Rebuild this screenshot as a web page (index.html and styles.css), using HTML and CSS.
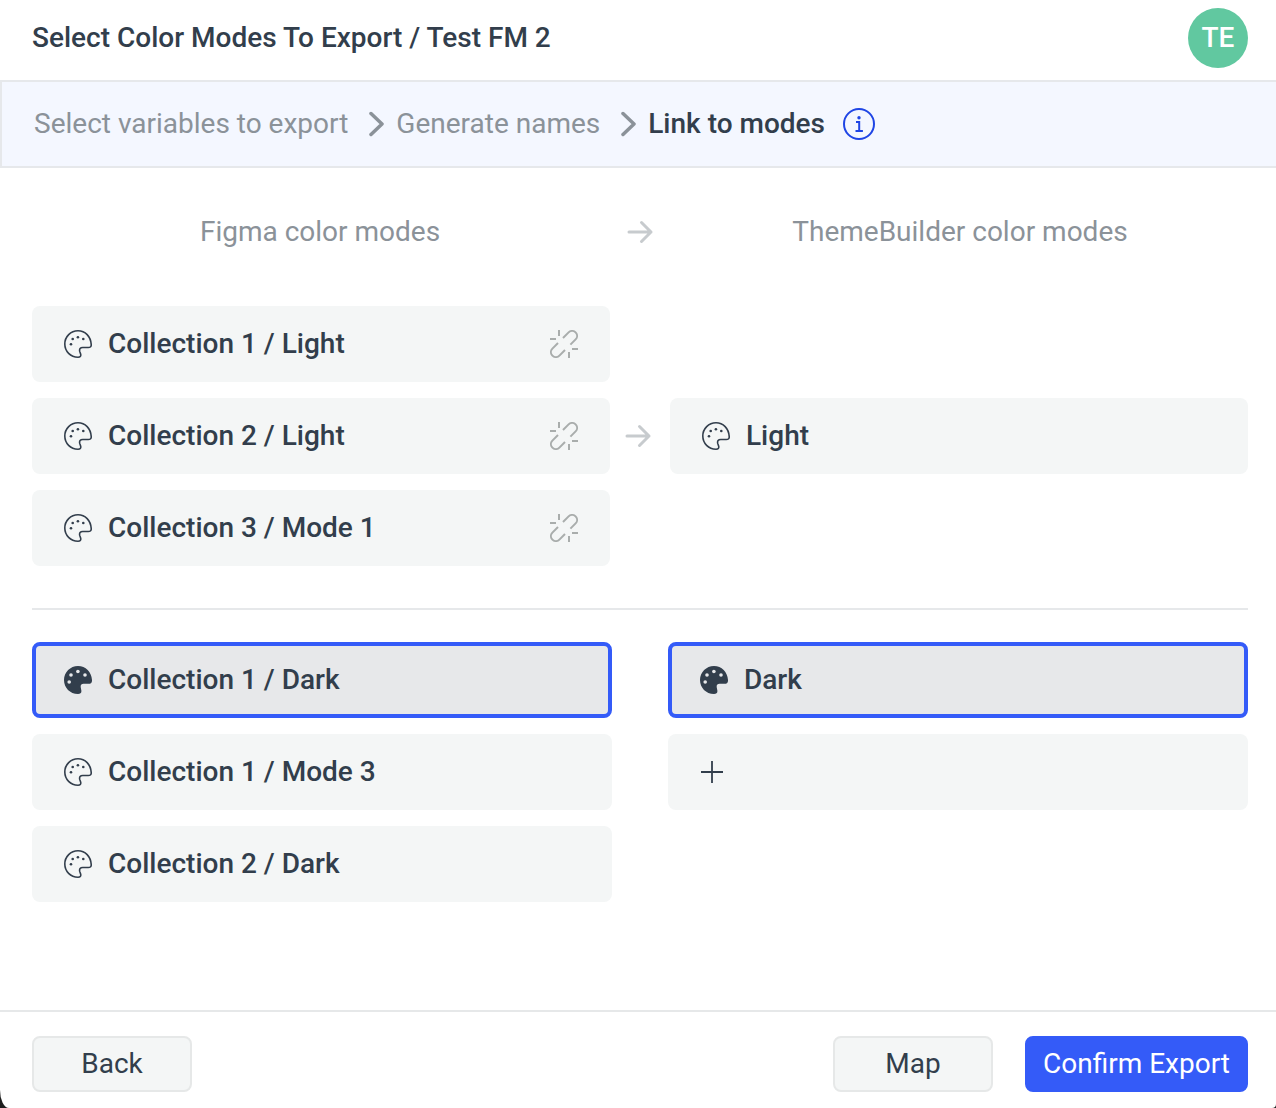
FILE: index.html
```html
<!DOCTYPE html>
<html lang="en">
<head>
  <meta charset="UTF-8">
  <meta name="viewport" content="width=device-width, initial-scale=1.0">
  <title>Select Color Modes To Export</title>
  <link rel="stylesheet" href="styles.css">
</head>
<body>
  <!-- shared icons -->
  <svg class="sprite" aria-hidden="true">
    <symbol id="palette" viewBox="0 0 28 28">
      <path d="M14 .8C6.700.8.8 6.700.8 14S6.500 27.200 14 27.200c2.200 0 3.100-1 2.700-2.900l-1-2.900c-.5-2.400.6-3.900 3-3.900h5.500c2.200 0 3.200-1 3-3.100C26.700 6.500 21.300.8 14 .8z" fill="none" stroke="currentColor" stroke-width="1.600"/>
      <g fill="currentColor">
        <circle cx="8.700" cy="9" r="1.300"/>
        <circle cx="13.900" cy="7.200" r="1.300"/>
        <circle cx="19.300" cy="9" r="1.300"/>
        <circle cx="7" cy="14.300" r="1.300"/>
      </g>
    </symbol>
    <symbol id="palette-fill" viewBox="0 0 28 28">
      <path d="M14 0C6.300 0 0 6.300 0 14s6 14 14 14c2.500 0 3.800-1.400 3.300-3.700l-.5-2.500c-.5-2.600.4-4 2.700-4H24.500c2.400 0 3.700-1.300 3.500-3.800C27.500 6 21.700 0 14 0z" fill="currentColor"/>
      <g fill="#e7e8ea">
        <circle cx="7" cy="9" r="1.800"/>
        <circle cx="13.900" cy="5.500" r="1.800"/>
        <circle cx="21" cy="9" r="1.800"/>
        <circle cx="5.200" cy="16" r="1.800"/>
      </g>
    </symbol>
    <symbol id="unlink" viewBox="0 0 28 28">
      <path d="M9 0v6M0 9h6M19 22v6M22 19h6M13 8l5.600-5.600a4.900 4.900 0 0 1 7 7l-5.200 5.200M8 13l-5.600 5.600a4.900 4.900 0 0 0 7 7L15 20" fill="none" stroke="currentColor" stroke-width="2"/>
    </symbol>
    <symbol id="arrow" viewBox="0 0 28 28">
      <path d="M3 14h22M15.500 4.500L25 14l-9.500 9.500" fill="none" stroke="currentColor" stroke-width="3" stroke-linecap="round" stroke-linejoin="round"/>
    </symbol>
    <symbol id="chevron" viewBox="0 0 16 28">
      <path d="M3 3.500L14 14 3 24.500" fill="none" stroke="currentColor" stroke-width="3.500" stroke-linecap="round" stroke-linejoin="round"/>
    </symbol>
  </svg>

  <div class="app">
    <header class="header">
      <h1>Select Color Modes To Export / Test FM 2</h1>
      <div class="avatar">TE</div>
    </header>

    <nav class="steps" aria-label="Export steps">
      <a href="#">Select variables to export</a>
      <svg class="chevron"><use href="#chevron"/></svg>
      <a href="#">Generate names</a>
      <svg class="chevron"><use href="#chevron"/></svg>
      <span class="current" aria-current="step">Link to modes</span>
      <button class="info" type="button" aria-label="Info">
        <svg viewBox="0 0 32 32">
          <circle cx="16" cy="16" r="15" fill="none" stroke="currentColor" stroke-width="2"/>
          <circle cx="16" cy="9.700" r="1.700" fill="currentColor"/>
          <path d="M13 14h3.200v9M12.500 23h7.400" fill="none" stroke="currentColor" stroke-width="2"/>
        </svg>
      </button>
    </nav>

    <main class="content">
      <div class="columns">
        <h2>Figma color modes</h2>
        <svg class="icon arrow"><use href="#arrow"/></svg>
        <h2>ThemeBuilder color modes</h2>
      </div>

      <section class="linked">
        <ul class="list">
          <li class="card">
            <svg class="icon"><use href="#palette"/></svg>
            <span>Collection 1 / Light</span>
            <button class="unlink" type="button" aria-label="Unlink Collection 1 / Light"><svg class="icon"><use href="#unlink"/></svg></button>
          </li>
          <li class="card">
            <svg class="icon"><use href="#palette"/></svg>
            <span>Collection 2 / Light</span>
            <button class="unlink" type="button" aria-label="Unlink Collection 2 / Light"><svg class="icon"><use href="#unlink"/></svg></button>
          </li>
          <li class="card">
            <svg class="icon"><use href="#palette"/></svg>
            <span>Collection 3 / Mode 1</span>
            <button class="unlink" type="button" aria-label="Unlink Collection 3 / Mode 1"><svg class="icon"><use href="#unlink"/></svg></button>
          </li>
        </ul>
        <svg class="icon arrow"><use href="#arrow"/></svg>
        <div class="card">
          <svg class="icon"><use href="#palette"/></svg>
          <span>Light</span>
        </div>
      </section>

      <section class="unlinked">
        <div class="list">
          <button class="card selected" type="button" aria-pressed="true">
            <svg class="icon"><use href="#palette-fill"/></svg>
            <span>Collection 1 / Dark</span>
          </button>
          <button class="card" type="button" aria-pressed="false">
            <svg class="icon"><use href="#palette"/></svg>
            <span>Collection 1 / Mode 3</span>
          </button>
          <button class="card" type="button" aria-pressed="false">
            <svg class="icon"><use href="#palette"/></svg>
            <span>Collection 2 / Dark</span>
          </button>
        </div>
        <div class="list">
          <button class="card selected" type="button" aria-pressed="true">
            <svg class="icon"><use href="#palette-fill"/></svg>
            <span>Dark</span>
          </button>
          <button class="card" type="button" aria-label="Add color mode">
            <svg class="plus" viewBox="0 0 24 24"><path d="M12 1v22M1 12h22" fill="none" stroke="currentColor" stroke-width="1.800"/></svg>
          </button>
        </div>
      </section>
    </main>

    <footer class="footer">
      <button class="btn" type="button">Back</button>
      <div class="actions">
        <button class="btn" type="button">Map</button>
        <button class="btn primary" type="button">Confirm Export</button>
      </div>
    </footer>
  </div>
</body>
</html>
```

FILE: styles.css
```css
* {
  margin: 0;
  padding: 0;
  box-sizing: border-box;
}

body {
  font-family: Roboto, 'Liberation Sans', sans-serif;
  font-size: 28px;
  line-height: 32px;
  color: #323e4c;
  background: #1e1e1e;
}

button {
  font: inherit;
  color: inherit;
  border: none;
  background: none;
  cursor: pointer;
}

svg {
  display: block;
  flex-shrink: 0;
}

.sprite {
  position: absolute;
  width: 0;
  height: 0;
}

.app {
  display: flex;
  flex-direction: column;
  min-height: 100vh;
  background: #fff;
  border-bottom-left-radius: 9px 18px;
  border-bottom-right-radius: 4px;
}

.header {
  display: flex;
  align-items: center;
  justify-content: space-between;
  padding: 8px 28px 12px 32px;
}

.header h1 {
  font-size: 28px;
  font-weight: 500;
}

.avatar {
  width: 60px;
  height: 60px;
  border-radius: 50%;
  background: #61c8a0;
  color: #fff;
  font-weight: 500;
  line-height: 60px;
  text-align: center;
}

.steps {
  display: flex;
  align-items: center;
  padding: 26px 32px;
  background: #f4f7ff;
  border: 2px solid #e6e8eb;
  border-right: none;
  color: #8b9299;
}

.steps a {
  color: inherit;
  text-decoration: none;
}

.steps .current {
  color: #323e4c;
  font-weight: 500;
}

.chevron {
  width: 16px;
  height: 28px;
  margin: 0 12px 0 20px;
}

.info {
  width: 32px;
  height: 32px;
  margin-left: 18px;
  color: #1f45e5;
}

.icon {
  width: 28px;
  height: 28px;
}

.arrow {
  color: #c7cbce;
}

.content {
  flex: 1;
  padding: 48px 28px 48px 32px;
}

.columns {
  display: grid;
  grid-template-columns: 1fr 64px 1fr;
  align-items: center;
  justify-items: center;
  margin-bottom: 58px;
}

.columns h2 {
  font-size: 28px;
  font-weight: 400;
  color: #8b9299;
}

.linked {
  display: grid;
  grid-template-columns: 1fr 60px 1fr;
  align-items: center;
  padding-bottom: 42px;
  border-bottom: 2px solid #e6e8ea;
}

.linked > .arrow {
  margin-left: 14px;
}

.unlinked {
  display: grid;
  grid-template-columns: 1fr 1fr;
  align-items: start;
  gap: 56px;
  padding-top: 32px;
}

.list {
  display: flex;
  flex-direction: column;
  gap: 16px;
  list-style: none;
}

.card {
  display: flex;
  align-items: center;
  gap: 16px;
  height: 76px;
  padding: 0 28px;
  border: 4px solid transparent;
  border-radius: 8px;
  background: #f4f6f6;
  font-weight: 500;
  text-align: left;
}

.card.selected {
  border-color: #345bf8;
  background: #e7e8ea;
}

.unlink {
  margin-left: auto;
  color: #a9adac;
}

.plus {
  width: 24px;
  height: 24px;
}

.footer {
  display: flex;
  justify-content: space-between;
  padding: 24px 28px 16px 32px;
  border-top: 2px solid #e6e8e9;
}

.actions {
  display: flex;
  gap: 32px;
}

.btn {
  min-width: 160px;
  height: 56px;
  padding: 0 16px;
  border: 2px solid #e6e8e8;
  border-radius: 8px;
  background: #f4f6f6;
}

.btn.primary {
  border-color: #345bf8;
  background: #345bf8;
  color: #fff;
}
```
